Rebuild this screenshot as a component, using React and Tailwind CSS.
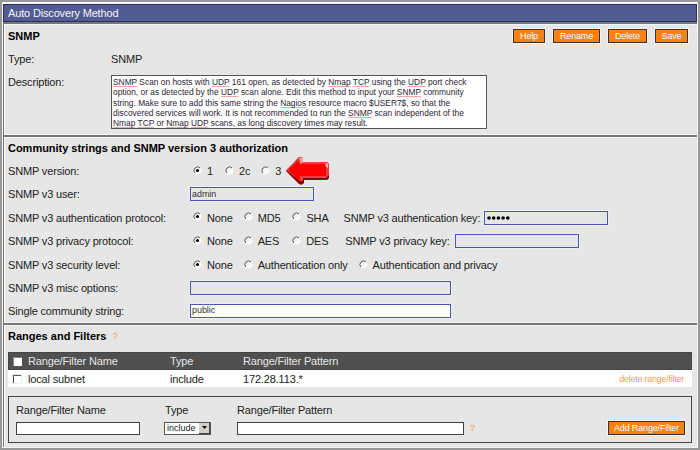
import React from "react";

const Label = ({ children, className = "" }) => (
  <div className={`shrink-0 whitespace-nowrap ${className}`}>{children}</div>
);

const OrangeButton = ({ children, className = "" }) => (
  <button
    className={`flex h-[14px] shrink-0 items-center justify-center border border-[#333] bg-[#ff800f] text-[9px] leading-none whitespace-nowrap text-white outline outline-[#f4f4f4] ${className}`}
  >
    {children}
  </button>
);

const Radio = ({ checked, children, className = "" }) => (
  <label className={`flex shrink-0 items-center whitespace-nowrap ${className}`}>
    <svg width="9" height="9" viewBox="0 0 9 9" className="mr-[5px] -mt-[2px] shrink-0">
      <circle cx="4.5" cy="4.5" r="3.6" fill="#f7f7f7" />
      <path d="M2 7A3.5 3.5 0 0 1 7 2" fill="none" stroke="#555" strokeWidth="1" />
      <path d="M7 2A3.5 3.5 0 0 1 2 7" fill="none" stroke="#fff" strokeWidth="1" />
      {checked && <circle cx="4.5" cy="4.5" r="1.6" fill="#000" />}
    </svg>
    <span>{children}</span>
  </label>
);

const Field = ({ children, className = "" }) => (
  <div
    className={`flex h-[14px] shrink-0 items-center border border-[#5252b4] pl-[1px] text-[9px] leading-none tracking-[-0.05px] text-[#333] outline outline-[#eeeeee] ${className}`}
  >
    {children}
  </div>
);

const M = ({ children }) => (
  <span className="underline decoration-[#f4a4a4] decoration-1 underline-offset-[1px] [text-decoration-skip-ink:none]">{children}</span>
);

const Arrow = () => (
  <svg width="45" height="30" viewBox="0 0 45 30" className="absolute top-[-4px] left-[277px]">
    <path d="M1 15 14 1 18 1 18 6 42 6Q44 7 44 9V21Q44 24 41 24H19V27Q17 30 14 28Z" fill="#8f0000" />
    <path d="M1 14 15 1 18 1V6H42L44 8V19L41 22H18V25H15Z" fill="#e04444" />
    <path d="M3 14 15 3V8H41V20H15V25Z" fill="#fa0000" />
    <path d="M14 2 18 1 18 6 15 8Z" fill="#ff9a92" />
    <path d="M40 8 43 7V12L41 11Z" fill="#ffb4b4" />
  </svg>
);

export default function App() {
  return (
    <div className="flex h-[450px] w-[700px] flex-col overflow-hidden border-2 border-[#999] bg-[#f4f4f4] pt-[2px] pr-[1px] pb-[1px] pl-[1px] font-['Liberation_Sans',Arial,sans-serif] text-[11px] leading-[14px] tracking-[-0.16px] text-[#222]">
      <div className="flex h-[18px] shrink-0 items-center border border-[#2b3058] bg-[#525c94] pl-[4px] text-[#f4f4f4]">
        Auto Discovery Method
      </div>

      <section className="h-[113px] shrink-0 border-t-2 border-l border-[#777] bg-[#e6e6e6] pt-[3px] pl-[4px] shadow-[inset_1px_1px_0_#f6f6f6,inset_0_-1px_0_#f6f6f6]">
        <div className="flex h-[18px] items-center pr-[9px]">
          <h1 className="flex-1 font-bold tracking-[0] text-black">SNMP</h1>
          <div className="flex gap-[8px]">
            <OrangeButton className="w-[32px]">Help</OrangeButton>
            <OrangeButton className="w-[47px]">Rename</OrangeButton>
            <OrangeButton className="w-[39px]">Delete</OrangeButton>
            <OrangeButton className="w-[33px]">Save</OrangeButton>
          </div>
        </div>
        <div className="mt-[7px] flex h-[14px]">
          <Label className="w-[103px]">Type:</Label>
          <div>SNMP</div>
        </div>
        <div className="mt-[9px] flex">
          <Label className="w-[103px]">Description:</Label>
          <div className="h-[54px] w-[376px] border border-[#555] bg-white pt-[1px] pl-[1px] text-[8.4px] leading-[10.35px] tracking-[0] whitespace-nowrap text-[#2c2434]">
            <div><M>SNMP</M> Scan on hosts with <M>UDP</M> 161 open, as detected by <M>Nmap</M> <M>TCP</M> using the <M>UDP</M> port check</div>
            <div>option, or as detected by the <M>UDP</M> scan alone. Edit this method to input your <M>SNMP</M> community</div>
            <div>string. Make sure to add this same string the <M>Nagios</M> resource macro $USER7$, so that the</div>
            <div>discovered services will work. It is not recommended to run the <M>SNMP</M> scan independent of the</div>
            <div><M>Nmap</M> <M>TCP</M> or <M>Nmap</M> <M>UDP</M> scans, as long discovery times may result.</div>
          </div>
        </div>
      </section>

      <section className="h-[188px] shrink-0 border-t-2 border-l border-[#777] bg-[#e6e6e6] pt-[2px] pl-[4px] shadow-[inset_1px_1px_0_#f6f6f6,inset_0_-1px_0_#f6f6f6]">
        <h2 className="h-[18px] leading-[18px] font-bold tracking-[-0.02px] text-black">Community strings and SNMP version 3 authorization</h2>
        <div className="relative mt-[3px] flex h-[22px] items-center">
          <Label className="w-[185px]">SNMP version:</Label>
          <Radio checked>1</Radio>
          <Radio className="ml-[12px]">2c</Radio>
          <Radio className="ml-[11px]">3</Radio>
          <Arrow />
        </div>
        <div className="flex h-[24px] items-center">
          <Label className="w-[182px]">SNMP v3 user:</Label>
          <Field className="w-[124px]">admin</Field>
        </div>
        <div className="flex h-[23px] items-center">
          <Label className="w-[185px]">SNMP v3 authentication protocol:</Label>
          <Radio checked>None</Radio>
          <Radio className="ml-[11px]">MD5</Radio>
          <Radio className="ml-[12px]">SHA</Radio>
          <Label className="ml-[15px]">SNMP v3 authentication key:</Label>
          <Field className="ml-[4px] w-[124px]">
            <svg width="25" height="6" viewBox="0 0 25 6" fill="#000">
              <circle cx="3" cy="3" r="1.8" />
              <circle cx="7.7" cy="3" r="1.8" />
              <circle cx="12.4" cy="3" r="1.8" />
              <circle cx="17.1" cy="3" r="1.8" />
              <circle cx="21.8" cy="3" r="1.8" />
            </svg>
          </Field>
        </div>
        <div className="flex h-[24px] items-center">
          <Label className="w-[185px]">SNMP v3 privacy protocol:</Label>
          <Radio checked>None</Radio>
          <Radio className="ml-[11px]">AES</Radio>
          <Radio className="ml-[13px]">DES</Radio>
          <Label className="ml-[17px]">SNMP v3 privacy key:</Label>
          <Field className="ml-[5px] w-[124px]" />
        </div>
        <div className="flex h-[24px] items-center">
          <Label className="w-[185px]">SNMP v3 security level:</Label>
          <Radio checked>None</Radio>
          <Radio className="ml-[11px]">Authentication only</Radio>
          <Radio className="ml-[11px]">Authentication and privacy</Radio>
        </div>
        <div className="flex h-[22px] items-center">
          <Label className="w-[182px]">SNMP v3 misc options:</Label>
          <Field className="w-[261px]" />
        </div>
        <div className="flex h-[23px] items-center">
          <Label className="w-[182px]">Single community string:</Label>
          <Field className="w-[261px] bg-white">public</Field>
        </div>
      </section>

      <section className="min-h-0 flex-1 border-t-2 border-l border-[#777] bg-[#e6e6e6] pt-[3px] pr-[5px] pl-[4px] shadow-[inset_1px_1px_0_#f6f6f6]">
        <h2 className="flex h-[16px] items-center font-bold tracking-[0] text-black">
          Ranges and Filters
          <span className="ml-[6px] text-[9px] font-normal text-[#f79a45]">?</span>
        </h2>
        <div className="mt-[8px] flex h-[18px] items-center border border-[#444] bg-[#505050] pl-[4px] text-[#e6e6e6]">
          <div className="mr-[6px] size-[9px] border-t border-l border-[#888] bg-white" />
          <Label className="w-[142px]">Range/Filter Name</Label>
          <Label className="w-[73px]">Type</Label>
          <Label>Range/Filter Pattern</Label>
        </div>
        <div className="flex h-[17px] items-center bg-white pr-[8px] pl-[5px]">
          <div className="mr-[7px] size-[8px] border-t border-l border-[#555] bg-white outline outline-[#eee]" />
          <Label className="w-[142px]">local subnet</Label>
          <Label className="w-[73px]">include</Label>
          <Label className="flex-1">172.28.113.*</Label>
          <Label className="text-[9px] tracking-[-0.25px] text-[#f9a050]">delete range/filter</Label>
        </div>
        <div className="mt-[9px] h-[47px] border border-[#444] pt-[5px] pr-[6px] pl-[7px]">
          <div className="flex h-[16px] items-center">
            <Label className="w-[149px]">Range/Filter Name</Label>
            <Label className="w-[72px]">Type</Label>
            <Label>Range/Filter Pattern</Label>
          </div>
          <div className="mt-[3px] flex h-[14px] items-center">
            <div className="mr-[24px] h-[13px] w-[124px] shrink-0 border border-[#444] bg-white" />
            <div className="mr-[26px] flex h-[13px] w-[47px] shrink-0 items-center border border-[#555] bg-white pl-[2px] text-[9px] leading-none tracking-[0]">
              <span className="flex-1">include</span>
              <span className="flex h-[11px] w-[11px] items-center justify-center border-r border-b border-[#444] bg-[#d4d0c8]">
                <svg width="5" height="3" viewBox="0 0 5 3"><path d="M0 0h5L2.5 3z" fill="#000" /></svg>
              </span>
            </div>
            <div className="h-[13px] w-[227px] shrink-0 border border-[#444] bg-white" />
            <span className="ml-[6px] flex-1 text-[9px] text-[#f79a45]">?</span>
            <OrangeButton className="w-[77px]">Add Range/Filter</OrangeButton>
          </div>
        </div>
      </section>
    </div>
  );
}
